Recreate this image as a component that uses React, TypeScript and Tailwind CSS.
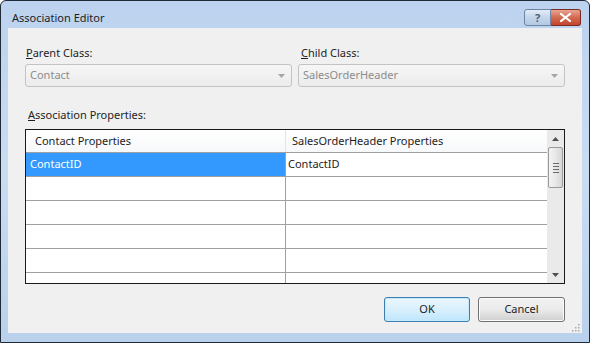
const font = "font-['Segoe_UI','Noto_Sans','Open_Sans',sans-serif]";

function Combo({ value }: { value: string }) {
    return (
        <div className="flex h-[23px] items-center justify-between rounded-[3px] border border-[#c3c3c3] bg-gradient-to-b from-[#f6f6f6] to-[#ececec] pl-[4px] pr-[6px]">
            <span className="text-[11px] text-[#8c8c8c]">{value}</span>
            <svg width="7" height="4" viewBox="0 0 7 4">
                <path d="M0 0h7L3.5 4z" fill="#a6a6a6" />
            </svg>
        </div>
    )
}

function Button({ label, active }: { label: string; active?: boolean }) {
    return (
        <div className={`flex h-[25px] items-center justify-center rounded-[3px] border text-[11px] text-[#222] ${active ? "w-[86px] border-[#3c7fb1] bg-gradient-to-b from-[#eaf6fd] via-[#d9f0fc] to-[#bee6fd] shadow-[inset_0_0_0_1px_#c6e9fb]" : "w-[87px] border-[#707070] bg-gradient-to-b from-[#f2f2f2] via-[#ebebeb] to-[#cfcfcf] shadow-[inset_0_0_0_1px_#fcfcfc]"}`}>
            {label}
        </div>
    )
}

export default function App() {
    const rows = [0, 1, 2, 3, 4]

    return (
        <div className={`${font} h-[343px] w-[590px] overflow-hidden rounded-t-[6px] border border-[#1f2a36] bg-gradient-to-b from-[#bcd2ee] via-[#c9dcf2] to-[#b9d1ec]`}>
            {/* title bar */}
            <div className="flex h-[27px] items-start justify-between pl-[11px] pr-[8px]">
                <span className="mt-[9px] text-[11px] leading-[15px] text-[#1e1e1e]">Association Editor</span>
                <div className="mt-[8px] flex">
                    <div className="flex h-[17px] w-[27px] items-center justify-center rounded-l-[3px] border border-[#6d85a3] bg-gradient-to-b from-[#e3ecf7] via-[#c3d5ea] to-[#b3c9e3] text-[11px] font-bold leading-none text-[#4b5d78]">?</div>
                    <div className="flex h-[17px] w-[30px] items-center justify-center rounded-r-[3px] border border-l-0 border-[#7a2a1d] bg-gradient-to-b from-[#e8a493] via-[#d26a52] to-[#c4442d]">
                        <svg width="11" height="9" viewBox="0 0 11 9">
                            <path d="M1 1l9 7M10 1l-9 7" stroke="#fff" strokeWidth="2.2" strokeLinecap="square" />
                        </svg>
                    </div>
                </div>
            </div>

            {/* client area */}
            <div className="mx-[7px] flex h-[305px] flex-col bg-[#f0f0f0] px-[17px] pt-[17px] text-[11px] text-[#1e1e1e]">
                <div className="flex gap-[6px]">
                    <div className="flex w-[267px] flex-col gap-[4px]">
                        <span className="pl-[1px] leading-[15px]"><u>P</u>arent Class:</span>
                        <Combo value="Contact" />
                    </div>
                    <div className="flex w-[267px] flex-col gap-[4px]">
                        <span className="pl-[3px] leading-[15px]"><u>C</u>hild Class:</span>
                        <Combo value="SalesOrderHeader" />
                    </div>
                </div>

                <span className="mt-[20px] pl-[3px] leading-[15px]"><u>A</u>ssociation Properties:</span>

                {/* grid */}
                <div className="mt-[7px] flex h-[155px] shrink-0 overflow-hidden border border-[#1a1a1a] bg-white">
                    <div className="flex flex-1 flex-col overflow-hidden">
                        <div className="flex h-[23px] shrink-0 border-b border-[#a0a0a0] bg-gradient-to-b from-white to-[#f7f8fa]">
                            <div className="flex w-[260px] items-center border-r border-[#e3e3e3] pl-[9px]">Contact Properties</div>
                            <div className="flex flex-1 items-center pl-[6px]">SalesOrderHeader Properties</div>
                        </div>
                        <div className="flex h-[24px] shrink-0 border-b border-[#a0a0a0]">
                            <div className="flex w-[260px] items-center border-r border-[#a0a0a0] bg-[#3399ff] pl-[4px] text-white">ContactID</div>
                            <div className="flex flex-1 items-center pl-[2px]">ContactID</div>
                        </div>
                        {rows.map((r) => (
                            <div key={r} className="flex h-[24px] shrink-0 border-b border-[#a0a0a0]">
                                <div className="w-[260px] border-r border-[#a0a0a0]" />
                                <div className="flex-1" />
                            </div>
                        ))}
                    </div>

                    {/* scrollbar */}
                    <div className="flex w-[17px] flex-col items-center bg-[#eaeaea]">
                        <div className="flex h-[17px] shrink-0 items-center justify-center">
                            <svg width="7" height="4" viewBox="0 0 7 4"><path d="M0 4h7L3.5 0z" fill="#505050" /></svg>
                        </div>
                        <div className="flex h-[41px] w-[15px] shrink-0 flex-col items-center justify-center gap-[2px] rounded-[2px] border border-[#9a9a9a] bg-gradient-to-r from-[#f3f3f3] via-[#e8e8e8] to-[#d6d6d6]">
                            {[0, 1, 2, 3].map((i) => (
                                <div key={i} className="h-[1px] w-[6px] bg-[#6a6a6a]" />
                            ))}
                        </div>
                        <div className="flex-1" />
                        <div className="flex h-[17px] shrink-0 items-center justify-center">
                            <svg width="7" height="4" viewBox="0 0 7 4"><path d="M0 0h7L3.5 4z" fill="#505050" /></svg>
                        </div>
                    </div>
                </div>

                <div className="mt-[13px] flex justify-end gap-[8px]">
                    <Button label="OK" active />
                    <Button label="Cancel" />
                </div>

                <div className="flex flex-1 items-end justify-end pb-[2px]">
                    <svg width="10" height="10" viewBox="0 0 10 10" className="-mr-[15px]">
                        {[[8, 2], [8, 5], [5, 5], [8, 8], [5, 8], [2, 8]].map(([x, y], i) => (
                            <rect key={i} x={x} y={y} width="1.5" height="1.5" fill="#a8a8a8" />
                        ))}
                    </svg>
                </div>
            </div>
        </div>
    )
}
